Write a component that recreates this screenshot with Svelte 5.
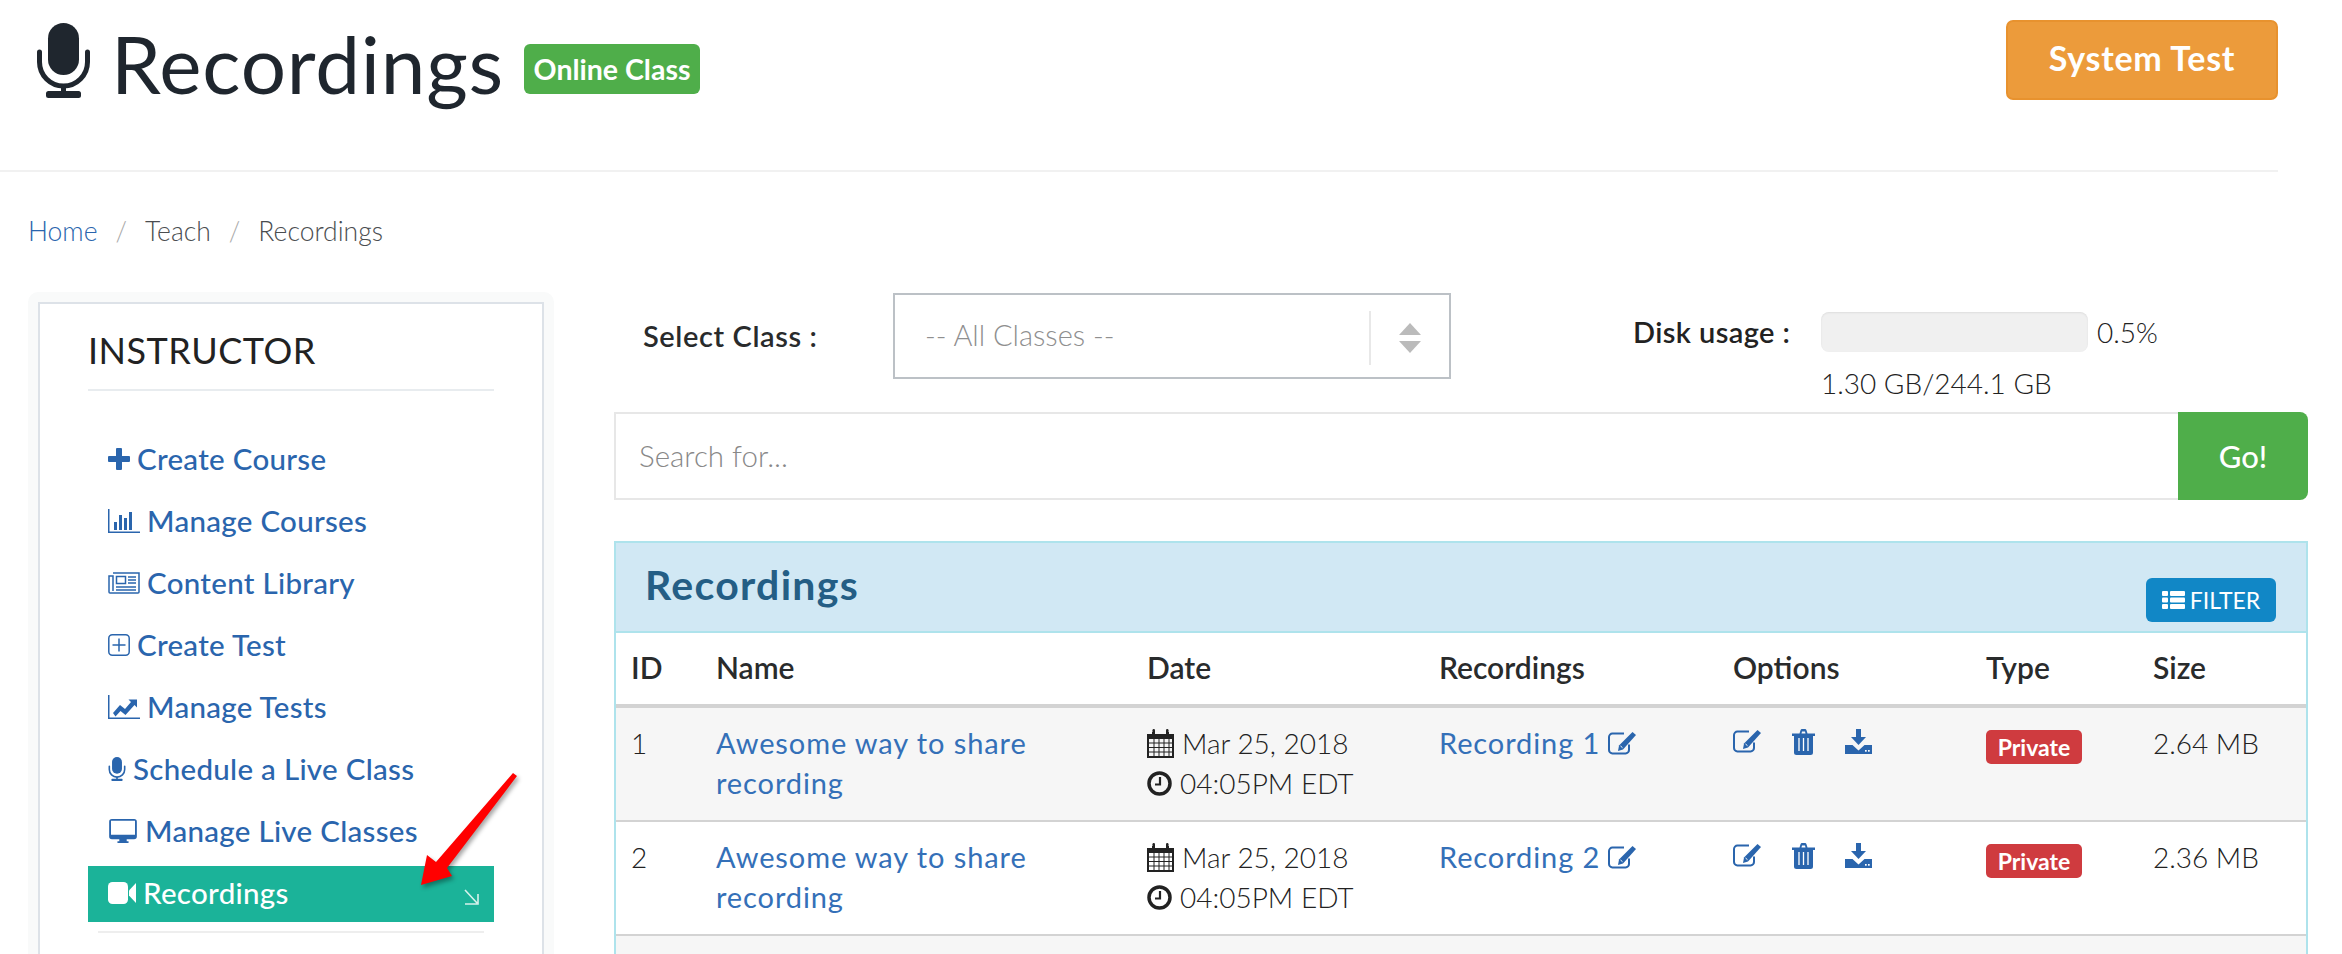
<script>
  const menu = [
    { label: 'Create Course', icon: 'plus' },
    { label: 'Manage Courses', icon: 'bars' },
    { label: 'Content Library', icon: 'news' },
    { label: 'Create Test', icon: 'plusbox' },
    { label: 'Manage Tests', icon: 'line' },
    { label: 'Schedule a Live Class', icon: 'mic' },
    { label: 'Manage Live Classes', icon: 'desktop' }
  ];

  const rows = [
    { id: 1, name: 'Awesome way to share recording', rec: 'Recording 1', size: '2.64 MB' },
    { id: 2, name: 'Awesome way to share recording', rec: 'Recording 2', size: '2.36 MB' }
  ];
</script>

{#snippet mic(cls)}
  <svg class={cls} viewBox="0 0 53 75" fill="currentColor">
    <rect x="11" y="0" width="31" height="52" rx="15.5" />
    <path d="M2.5 29v10a24 24 0 0 0 48 0V29" fill="none" stroke="currentColor" stroke-width="5" stroke-linecap="round" />
    <rect x="24" y="62" width="5" height="10" />
    <rect x="9" y="68" width="35" height="7" rx="2.5" />
  </svg>
{/snippet}

{#snippet edit(cls)}
  <svg class={cls} viewBox="0 0 29 24" fill="currentColor">
    <path d="M21 13.5V19a3.4 3.4 0 0 1-3.400 3.400H4.400A3.400 3.400 0 0 1 1 19V6a3.400 3.400 0 0 1 3.400-3.400H16" fill="none" stroke="currentColor" stroke-width="2" />
    <path d="M24.500 1l3.500 3-13 14.500-5 1.500 1-5.500z" />
    <path d="M12.500 15l2 1.700" stroke="#fff" stroke-width="1" />
  </svg>
{/snippet}

{#snippet trash(cls)}
  <svg class={cls} viewBox="0 0 23 26" fill="currentColor">
    <path d="M0 4.500h7.500L8.500 1.200Q8.900 0 10 0h3q1.100 0 1.500 1.200l1 3.300H23V7H21v16.500Q21 26 18.500 26h-14Q2 26 2 23.500V7H0zM9.500 4.500h4l-.5-2h-3z" />
    <path d="M7 9v13M11.500 9v13M16 9v13" stroke="#fff" stroke-width="1.300" />
  </svg>
{/snippet}

{#snippet download(cls)}
  <svg class={cls} viewBox="0 0 27 25" fill="currentColor">
    <path d="M11 0h5v8h5l-7.500 8L6 8h5z" />
    <path d="M0 16h7.500l6 5.500 6-5.500H27v9H0z" />
    <rect x="20" y="21" width="1.700" height="1.700" fill="#fff" />
    <rect x="23" y="21" width="1.700" height="1.700" fill="#fff" />
  </svg>
{/snippet}

{#snippet calendar()}
  <svg class="i-cal" viewBox="0 0 27 29" fill="currentColor">
    <path d="M0 5h5V3h3v2h11V3h3v2h5v24H0zM2 10v17h23V10z" />
    <rect x="5.500" y="0" width="2.500" height="6.500" rx="1.200" />
    <rect x="19" y="0" width="2.500" height="6.500" rx="1.200" />
    <path d="M7 10v17M12 10v17M17 10v17M22 10v17M2 14h23M2 18.500h23M2 23h23" stroke="currentColor" stroke-width="1" />
  </svg>
{/snippet}

{#snippet clock()}
  <svg class="i-clock" viewBox="0 0 25 25" fill="none" stroke="currentColor">
    <circle cx="12.500" cy="12.500" r="10.500" stroke-width="3.500" />
    <path d="M13 6v7.500H8" stroke-width="2.200" />
  </svg>
{/snippet}

{#snippet menuIcon(name)}
  {#if name === 'plus'}
    <svg class="mi" style="width:22px" viewBox="0 0 22 22" fill="currentColor">
      <path d="M8 1q0-1 1-1h4q1 0 1 1v7h7q1 0 1 1v4q0 1-1 1h-7v7q0 1-1 1H9q-1 0-1-1v-7H1q-1 0-1-1V9q0-1 1-1h7z" />
    </svg>
  {:else if name === 'bars'}
    <svg class="mi" style="width:32px" viewBox="0 0 32 24" fill="currentColor">
      <path d="M0 0h1.500v22.500H32V24H0z" />
      <rect x="6" y="13" width="3" height="8" />
      <rect x="11" y="6" width="3" height="15" />
      <rect x="16" y="9" width="3" height="12" />
      <rect x="21" y="3" width="3" height="18" />
    </svg>
  {:else if name === 'news'}
    <svg class="mi" style="width:32px" viewBox="0 0 32 22" fill="none" stroke="currentColor" stroke-width="1.500">
      <path d="M5 1h26v19a1 1 0 0 1-1 1H2a1 1 0 0 1-1-1V4h4v15" />
      <rect x="8.500" y="4.500" width="9" height="7" />
      <path d="M20 5h8M20 8h8M20 11h8M8 15h20M8 18h20" />
    </svg>
  {:else if name === 'plusbox'}
    <svg class="mi" style="width:22px" viewBox="0 0 22 22" fill="none" stroke="currentColor" stroke-width="1.500">
      <rect x=".8" y=".8" width="20.400" height="20.400" rx="3.500" />
      <path d="M11 4.500v13M4.500 11h13" />
    </svg>
  {:else if name === 'line'}
    <svg class="mi" style="width:32px" viewBox="0 0 32 24" fill="currentColor">
      <path d="M0 0h1.500v22.500H32V24H0z" />
      <path d="M5 18l7-8 5 4 6-7-2.500-2.500H29v8l-2.500-2.500-9 10-5-4-5 5.500z" />
    </svg>
  {:else if name === 'mic'}
    {@render mic('mi mi-mic')}
  {:else if name === 'desktop'}
    <svg class="mi" style="width:30px" viewBox="0 0 30 26" fill="currentColor">
      <path d="M3 0h24a3 3 0 0 1 3 3v16a3 3 0 0 1-3 3H19v2h2v2H9v-2h2v-2H3a3 3 0 0 1-3-3V3a3 3 0 0 1 3-3zM2 2v15h26V2z" />
    </svg>
  {/if}
{/snippet}

<div class="page">
  <header class="top">
    <div class="title">
      {@render mic('i-title')}
      <h1>Recordings</h1>
      <span class="badge-online">Online Class</span>
    </div>
    <button class="system">System Test</button>
  </header>

  <nav class="crumbs">
    <a href="#home">Home</a>
    <span class="sep">/</span>
    <span>Teach</span>
    <span class="sep">/</span>
    <span>Recordings</span>
  </nav>

  <div class="body">
    <aside class="side">
      <div class="side-inner">
        <h2>INSTRUCTOR</h2>
        <ul>
          {#each menu as item}
            <li>
              <a href="#item">
                {@render menuIcon(item.icon)}
                {item.label}
              </a>
            </li>
          {/each}
          <li class="active">
            <a href="#rec">
              <svg class="mi" style="width:28px" viewBox="0 0 28 22" fill="currentColor">
                <rect x="0" y="0" width="20" height="22" rx="4.500" />
                <path d="M21 8.500L28 1v20l-7-7.500z" />
              </svg>
              Recordings
              <svg class="corner" viewBox="0 0 15 17" fill="none" stroke="#d7f2ec" stroke-width="1.600">
                <path d="M1 2l12 13M14 6v10H1" />
              </svg>
            </a>
          </li>
        </ul>
      </div>
    </aside>

    <main class="main">
      <div class="controls">
        <span class="sel-label">Select Class :</span>
        <div class="select">
          <span>-- All Classes --</span>
          <div class="arrows">
            <i class="up"></i>
            <i class="down"></i>
          </div>
        </div>
        <div class="disk">
          <span class="disk-label">Disk usage :</span>
          <div class="disk-bar">
            <div class="track"></div>
            <span>0.5%</span>
          </div>
          <span class="disk-total">1.30 GB/244.1 GB</span>
        </div>
      </div>

      <div class="search">
        <input type="text" placeholder="Search for..." />
        <button>Go!</button>
      </div>

      <section class="panel">
        <div class="panel-head">
          <h3>Recordings</h3>
          <button class="filter">
            <svg viewBox="0 0 23 18" fill="#fff">
              <rect x="0" y="0" width="6" height="5" rx="1" />
              <rect x="8" y="0" width="15" height="5" rx="1" />
              <rect x="0" y="6.500" width="6" height="5" rx="1" />
              <rect x="8" y="6.500" width="15" height="5" rx="1" />
              <rect x="0" y="13" width="6" height="5" rx="1" />
              <rect x="8" y="13" width="15" height="5" rx="1" />
            </svg>
            FILTER
          </button>
        </div>
        <table>
          <colgroup>
            <col style="width:85px" />
            <col style="width:431px" />
            <col style="width:292px" />
            <col style="width:294px" />
            <col style="width:253px" />
            <col style="width:167px" />
          </colgroup>
          <thead>
            <tr>
              <th>ID</th>
              <th>Name</th>
              <th>Date</th>
              <th>Recordings</th>
              <th>Options</th>
              <th>Type</th>
              <th>Size</th>
            </tr>
          </thead>
          <tbody>
            {#each rows as row}
              <tr>
                <td>{row.id}</td>
                <td><a href="#r">{row.name}</a></td>
                <td>
                  <div class="when">{@render calendar()} Mar 25, 2018</div>
                  <div class="when">{@render clock()} 04:05PM EDT</div>
                </td>
                <td><a href="#r">{row.rec}</a> {@render edit('i-edit')}</td>
                <td>
                  <div class="opts">
                    {@render edit('i-edit')}
                    {@render trash('i-trash')}
                    {@render download('i-down')}
                  </div>
                </td>
                <td><span class="private">Private</span></td>
                <td>{row.size}</td>
              </tr>
            {/each}
            <tr class="more"><td colspan="7"></td></tr>
          </tbody>
        </table>
      </section>
    </main>
  </div>

  <svg class="pointer" viewBox="0 0 110 125" width="110" height="125">
    <polygon points="96,1 100,4 30,96 35,104 4,113 10,83 19,90" fill="#f00" />
  </svg>
</div>

<style>
  :global(body) {
    margin: 0;
    background: #fff;
    font-family: "Lato", "Liberation Sans", sans-serif;
    color: #292b2c;
  }
  a {
    color: #2a65ad;
    text-decoration: none;
  }
  .page {
    position: relative;
    height: 954px;
    overflow: hidden;
  }
  .top {
    width: 2278px;
    height: 170px;
    display: flex;
    justify-content: space-between;
    align-items: flex-start;
    border-bottom: 2px solid #f1f1f1;
  }
  .title {
    display: flex;
    align-items: flex-start;
    padding: 23px 0 0 37px;
  }
  .i-title {
    width: 53px;
    height: 75px;
    color: #1f262e;
  }
  h1 {
    margin: -5px 0 0 21px;
    font-size: 80px;
    line-height: 90px;
    font-weight: 400;
    letter-spacing: .8px;
    color: #1f262e;
  }
  .badge-online {
    margin: 21px 0 0 20px;
    width: 176px;
    height: 50px;
    line-height: 50px;
    text-align: center;
    background: #4fae4a;
    color: #fff;
    border-radius: 6px;
    font-size: 28.500px;
    font-weight: 700;
  }
  .system {
    margin-top: 20px;
    width: 272px;
    height: 80px;
    padding: 0 0 5px;
    background: #ec9b3b;
    border: 2px solid #e8922e;
    border-radius: 7px;
    color: #fff;
    font: 700 34px "Lato", sans-serif;
    letter-spacing: .7px;
  }
  .crumbs {
    height: 118px;
    display: flex;
    align-items: center;
    padding: 0 0 2px 28px;
    gap: 18px;
    font-size: 26.500px;
    font-weight: 300;
    color: #4a4d50;
  }
  .sep {
    color: #aaa;
  }
  .body {
    display: grid;
    grid-template-columns: 526px 1694px;
    gap: 60px;
    padding-left: 28px;
  }
  .side {
    background: #f9fafa;
    border-radius: 10px 10px 0 0;
    padding: 10px 10px 0;
    height: 662px;
  }
  .side-inner {
    background: #fff;
    border: 2px solid #dde2e8;
    height: 100%;
    padding: 0 48px;
  }
  h2 {
    margin: 0;
    height: 87px;
    line-height: 60px;
    box-sizing: border-box;
    border-bottom: 2px solid #e8ecef;
    font-size: 36px;
    font-weight: 400;
    color: #222;
    letter-spacing: .5px;
    padding-top: 16px;
  }
  ul {
    list-style: none;
    margin: 0;
    padding: 41px 0 0;
    display: flex;
    flex-direction: column;
    gap: 6px;
  }
  li a {
    height: 56px;
    box-sizing: border-box;
    display: flex;
    align-items: center;
    gap: 7px;
    padding: 0 20px 3px;
    font-size: 29.500px;
    letter-spacing: .3px;
    font-weight: 500;
  }
  .mi {
    height: 24px;
    flex: none;
  }
  :global(.mi-mic) {
    width: 18px;
  }
  .active {
    position: relative;
    padding-bottom: 11px;
  }
  .active::after {
    content: '';
    position: absolute;
    left: 10px;
    right: 10px;
    bottom: 0;
    border-bottom: 2px solid #eee;
  }
  .active a {
    background: #1bb399;
    color: #fff;
    position: relative;
  }
  .corner {
    position: absolute;
    right: 15px;
    top: 22px;
    width: 15px;
    height: 17px;
  }
  .controls {
    height: 120px;
    display: flex;
    align-items: flex-start;
  }
  .sel-label {
    width: 279px;
    box-sizing: border-box;
    padding: 26px 0 0 29px;
    font-size: 29px;
    font-weight: 600;
    letter-spacing: .6px;
  }
  .select {
    width: 558px;
    height: 86px;
    margin-top: 1px;
    box-sizing: border-box;
    border: 2px solid #bcc1c6;
    display: flex;
    align-items: center;
    padding: 0 0 4px 30px;
    color: #8f8f8f;
    font-size: 29px;
    font-weight: 300;
    position: relative;
  }
  .arrows {
    position: absolute;
    right: 0;
    top: 16px;
    width: 78px;
    height: 54px;
    border-left: 2px solid #e8e8e8;
    display: flex;
    flex-direction: column;
    align-items: center;
    justify-content: center;
    gap: 6px;
  }
  .up, .down {
    width: 0;
    height: 0;
    border-left: 11px solid transparent;
    border-right: 11px solid transparent;
  }
  .up {
    border-bottom: 12px solid #bbb;
  }
  .down {
    border-top: 12px solid #bbb;
  }
  .disk {
    margin-left: 182px;
    display: grid;
    grid-template-columns: 188px auto;
    row-gap: 14px;
    padding-top: 20px;
    font-size: 28px;
    color: #222;
  }
  .disk-label {
    font-weight: 600;
    line-height: 40px;
    font-size: 29px;
    letter-spacing: .4px;
  }
  .disk-bar {
    display: flex;
    align-items: center;
    gap: 9px;
    font-weight: 300;
  }
  .track {
    width: 267px;
    height: 40px;
    background: #f0f0f0;
    border-radius: 8px;
    box-shadow: inset 0 1px 2px rgba(0, 0, 0, .08);
  }
  .disk-total {
    grid-column: 2;
    font-weight: 300;
    line-height: 34px;
  }
  .search {
    display: flex;
    height: 88px;
  }
  .search input {
    flex: 1;
    min-width: 0;
    box-sizing: border-box;
    border: 2px solid #e7e7e7;
    border-right: 0;
    outline: 0;
    padding: 0 23px 2px;
    font: 300 29.500px "Lato", sans-serif;
  }
  .search input::placeholder {
    color: #888;
    opacity: 1;
  }
  .search button {
    width: 130px;
    border: 0;
    background: #4fae4a;
    color: #fff;
    border-radius: 0 8px 8px 0;
    font: 500 31px "Lato", sans-serif;
  }
  .panel {
    margin-top: 41px;
    border: 2px solid #aee3ec;
    border-bottom: 0;
  }
  .panel-head {
    height: 90px;
    box-sizing: border-box;
    background: #d1e8f4;
    border-bottom: 2px solid #aee3ec;
    position: relative;
    display: flex;
    align-items: center;
    padding: 0 0 5px 29px;
  }
  h3 {
    margin: 0;
    font-size: 41px;
    font-weight: 700;
    letter-spacing: 1.300px;
    color: #245e85;
  }
  .filter {
    position: absolute;
    right: 30px;
    top: 35px;
    width: 130px;
    height: 44px;
    border: 0;
    border-radius: 6px;
    background: #1187c6;
    color: #fff;
    font: 400 23px "Lato", sans-serif;
    display: flex;
    align-items: center;
    justify-content: center;
    gap: 5px;
  }
  .filter svg {
    width: 23px;
    height: 18px;
  }
  table {
    width: 100%;
    table-layout: fixed;
    border-collapse: separate;
    border-spacing: 0;
  }
  th {
    height: 75px;
    box-sizing: border-box;
    padding: 0 0 3px 15px;
    text-align: left;
    font-size: 30px;
    font-weight: 600;
    border-bottom: 4px solid #d3d3d3;
  }
  td {
    box-sizing: content-box;
    padding: 15px 15px 0;
    vertical-align: top;
    font-size: 28px;
    line-height: 40px;
    font-weight: 300;
    color: #222;
    border-bottom: 2px solid #d3d3d3;
  }
  tbody tr:nth-child(odd) td {
    background: #f6f6f6;
  }
  tbody tr td {
    height: 97px;
  }
  .more td {
    height: 40px;
  }
  td a {
    font-size: 29px;
    font-weight: 400;
    letter-spacing: .9px;
    color: #3470b8;
  }
  .when {
    display: flex;
    align-items: center;
    gap: 8px;
    white-space: nowrap;
  }
  .i-cal {
    width: 27px;
    height: 29px;
    color: #222;
  }
  .i-clock {
    width: 25px;
    height: 25px;
    color: #222;
  }
  :global(.i-edit) {
    width: 29px;
    height: 24px;
    color: #2a65ad;
    vertical-align: -1px;
  }
  :global(.i-trash) {
    width: 23px;
    height: 26px;
    color: #2a65ad;
  }
  :global(.i-down) {
    width: 27px;
    height: 25px;
    color: #2a65ad;
  }
  .opts {
    display: flex;
    align-items: flex-start;
    gap: 30px;
    padding-top: 6px;
  }
  .private {
    display: block;
    width: 96px;
    height: 34px;
    margin-top: 7px;
    background: #cf3b3f;
    color: #fff;
    border-radius: 5px;
    text-align: center;
    font-size: 23px;
    line-height: 34px;
    font-weight: 700;
  }
  .pointer {
    position: absolute;
    left: 417px;
    top: 772px;
    filter: drop-shadow(2px 3px 2px rgba(0, 0, 0, .35));
  }
</style>
